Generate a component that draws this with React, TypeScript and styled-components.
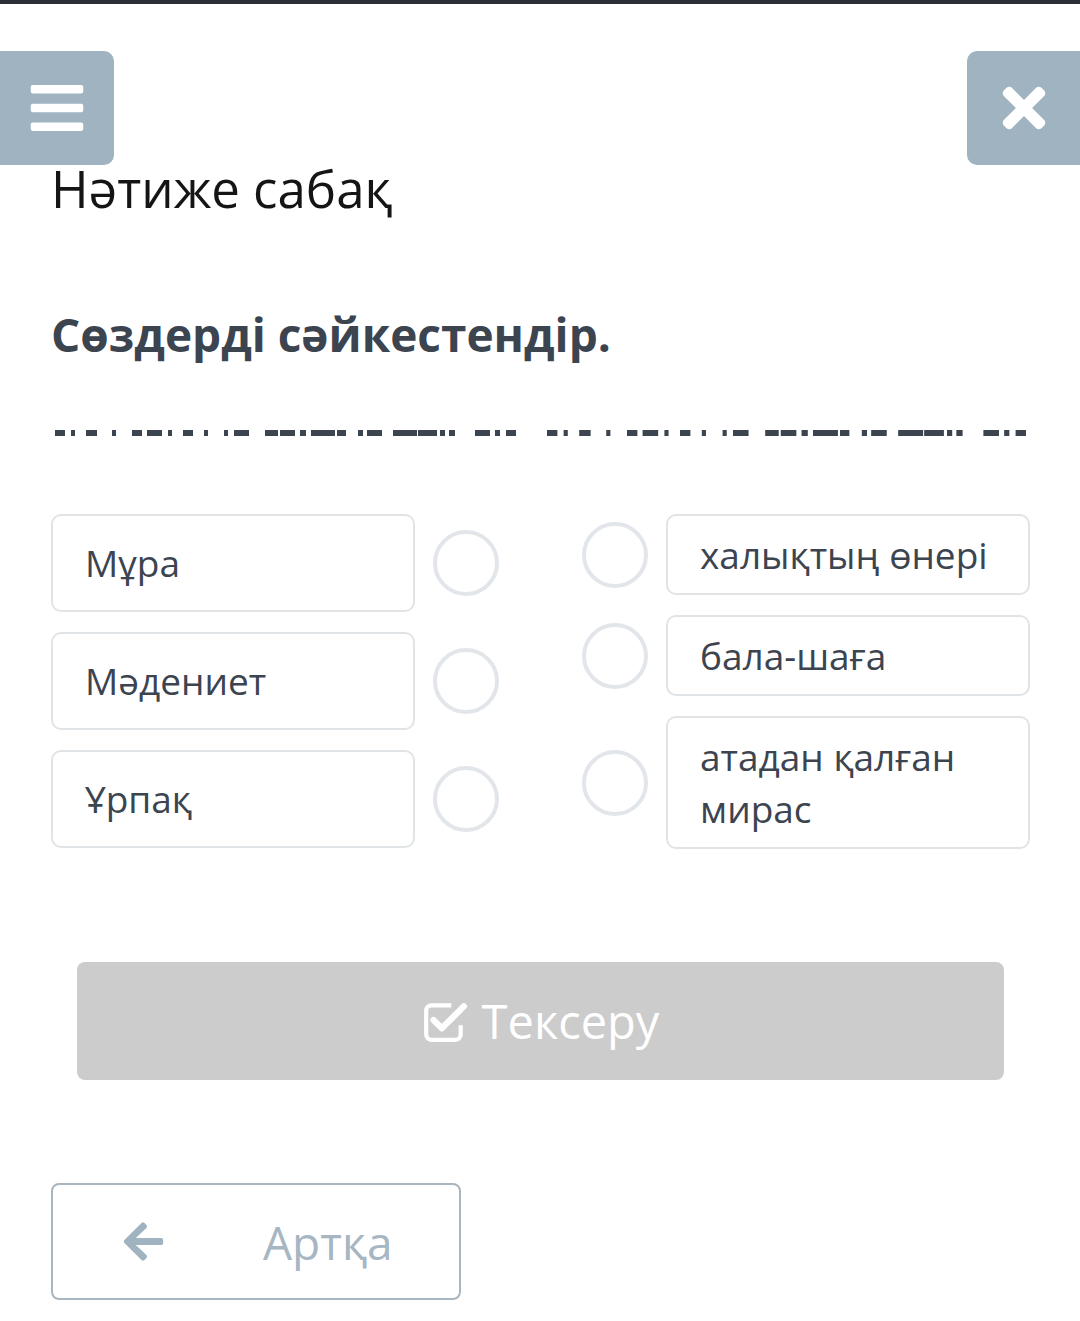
import React from "react";
import styled, { createGlobalStyle } from "styled-components";
import { FaBars, FaTimes, FaArrowLeft } from "react-icons/fa";

const Global = createGlobalStyle`
  html, body { margin: 0; padding: 0; background: #ffffff; }
  body { font-family: "Open Sans", "Noto Sans", sans-serif; }
  * { box-sizing: border-box; }
`;

const Page = styled.div`
  width: 1080px;
  min-height: 1321px;
  background: #fff;
  display: flex;
  flex-direction: column;
`;

const TopBar = styled.div`
  height: 4px;
  background: #2b2f38;
`;

const Header = styled.div`
  margin-top: 47px;
  display: flex;
  justify-content: space-between;
`;

const IconButton = styled.button<{ $side: "left" | "right" }>`
  width: ${(p) => (p.$side === "left" ? "114px" : "113px")};
  height: 114px;
  border: none;
  padding: 0;
  background: #9fb3c0;
  color: #fff;
  display: flex;
  align-items: center;
  justify-content: center;
  border-radius: ${(p) => (p.$side === "left" ? "0 10px 10px 0" : "10px 0 0 10px")};
  font-size: ${(p) => (p.$side === "left" ? "60px" : "62px")};
`;

const Content = styled.div`
  padding: 0 50px 0 51px;
  display: flex;
  flex-direction: column;
`;

const Title = styled.h1`
  margin: -6px 0 0 0;
  font-size: 51px;
  line-height: 58px;
  font-weight: 400;
  color: #151515;
`;

const Subtitle = styled.h2`
  margin: 90px 0 0 0;
  font-size: 46px;
  line-height: 55px;
  font-weight: 700;
  color: #3c4450;
`;

const DashLine = styled.svg`
  display: block;
  margin-top: 68px;
  margin-left: -51px;
`;

const MatchArea = styled.div`
  margin-top: 78px;
  display: flex;
  justify-content: space-between;
`;

const Column = styled.div`
  display: flex;
  flex-direction: column;
  gap: 20px;
`;

const Item = styled.div`
  display: flex;
  align-items: center;
  gap: 18px;
`;

const WordBox = styled.div<{ $tall?: boolean }>`
  width: 364px;
  border: 2px solid #e1e4e7;
  border-radius: 10px;
  padding: ${(p) => (p.$tall ? "21px 32px" : "12.5px 32px")};
  font-size: 37px;
  line-height: 52px;
  color: #3c4450;
`;

const Circle = styled.div`
  width: 66px;
  height: 66px;
  border-radius: 50%;
  border: 4px solid #e2e6ea;
  flex-shrink: 0;
`;

const CheckButton = styled.button`
  margin: 113px 26px 0 26px;
  height: 118px;
  border: none;
  border-radius: 8px;
  background: #cccccc;
  color: #fff;
  font-family: "Open Sans", sans-serif;
  font-size: 47px;
  display: flex;
  align-items: center;
  justify-content: center;
  gap: 14px;
  padding: 0;
`;

const BackButton = styled.button`
  margin-top: 103px;
  width: 410px;
  height: 117px;
  border: 2px solid #aab6bf;
  border-radius: 8px;
  background: #fff;
  color: #a6b6c2;
  font-family: "Open Sans", sans-serif;
  font-size: 46px;
  display: flex;
  align-items: center;
  padding: 0 0 0 68px;
  gap: 97px;
`;

const ArrowIcon = styled(FaArrowLeft)`
  color: #9fb3c0;
  font-size: 45px;
`;

const segs: [number, number][] = [
  [55, 65], [71, 75], [86, 97], [112, 116], [132, 142], [147, 162], [168, 172],
  [183, 193], [204, 208], [224, 228], [234, 249], [265, 278], [280, 295],
  [300, 306], [311, 335], [337, 346], [358, 363], [367, 382], [393, 417],
  [418, 437], [440, 445], [449, 455], [475, 490], [495, 500], [506, 516],
];

const groups = [
  { off: 0, scale: 1 },
  { off: 547, scale: 1.039 },
];

const CheckSquare = () => (
  <svg width="46" height="42" viewBox="0 0 44 40">
    <path
      d="M28 5 H9 a5 5 0 0 0 -5 5 v23 a5 5 0 0 0 5 5 h23 a5 5 0 0 0 5 -5 v-9"
      fill="none"
      stroke="#fff"
      strokeWidth="4"
    />
    <polyline
      points="11,19 19,27 40,6"
      fill="none"
      stroke="#fff"
      strokeWidth="6"
      strokeLinecap="round"
      strokeLinejoin="round"
    />
  </svg>
);

const leftWords = ["Мұра", "Мәдениет", "Ұрпақ"];
const rightWords = ["халықтың өнері", "бала-шаға", "атадан қалған мирас"];

export default function App() {
  return (
    <Page>
      <Global />
      <TopBar />
      <Header>
        <IconButton $side="left">
          <FaBars />
        </IconButton>
        <IconButton $side="right">
          <FaTimes />
        </IconButton>
      </Header>
      <Content>
        <Title>Нәтиже сабақ</Title>
        <Subtitle>Сөздерді сәйкестендір.</Subtitle>
        <DashLine width="1080" height="6" viewBox="0 0 1080 6">
          {groups.map(({ off, scale }) =>
            segs.map(([a, b], i) => {
              const x0 = off === 0 ? a : off + (a - 55) * scale;
              const w = (b - a) * scale;
              return <rect key={`${off}-${i}`} x={x0} y={0} width={w} height={6} fill="#3c4450" />;
            })
          )}
        </DashLine>
        <MatchArea>
          <Column>
            {leftWords.map((w) => (
              <Item key={w}>
                <WordBox $tall>{w}</WordBox>
                <Circle />
              </Item>
            ))}
          </Column>
          <Column>
            {rightWords.map((w) => (
              <Item key={w}>
                <Circle />
                <WordBox>{w}</WordBox>
              </Item>
            ))}
          </Column>
        </MatchArea>
        <CheckButton>
          <CheckSquare />
          <span>Тексеру</span>
        </CheckButton>
        <BackButton>
          <ArrowIcon />
          <span>Артқа</span>
        </BackButton>
      </Content>
    </Page>
  );
}
